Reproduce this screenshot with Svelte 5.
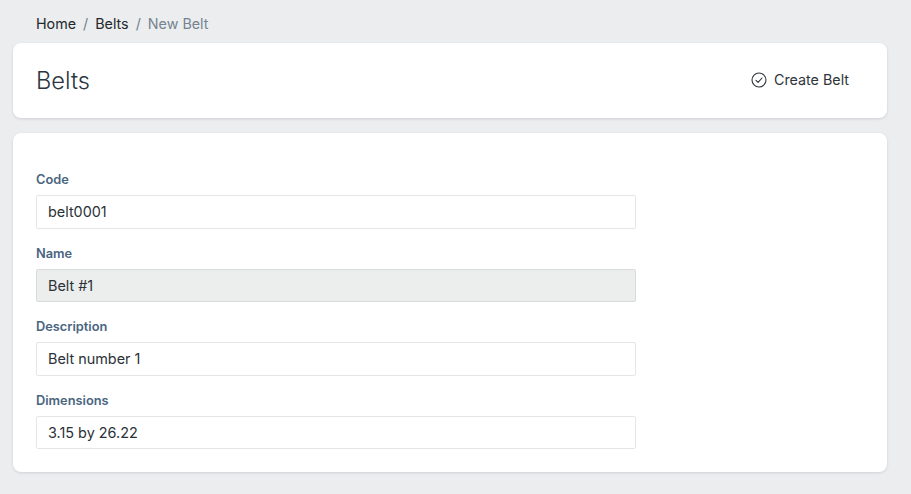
<script>
  const fields = [
    { id: 'code', label: 'Code', value: 'belt0001' },
    { id: 'name', label: 'Name', value: 'Belt #1', disabled: true },
    { id: 'description', label: 'Description', value: 'Belt number 1' },
    { id: 'dimensions', label: 'Dimensions', value: '3.15 by 26.22' }
  ];
</script>

<div class="page">
  <nav class="breadcrumb">
    <a href="#home">Home</a>
    <span class="sep">/</span>
    <a href="#belts">Belts</a>
    <span class="sep">/</span>
    <span class="current">New Belt</span>
  </nav>

  <header class="card head">
    <h1>Belts</h1>
    <button type="button" class="create">
      <svg width="16" height="16" viewBox="0 0 16 16" fill="none" stroke="currentColor" stroke-width="1.1" stroke-linecap="round" stroke-linejoin="round">
        <circle cx="8" cy="8" r="7" />
        <path d="M5 8.3l2.1 2.1L11 6" />
      </svg>
      Create Belt
    </button>
  </header>

  <form class="card body">
    {#each fields as f}
      <div class="field">
        <label for={f.id}>{f.label}</label>
        <input id={f.id} value={f.value} disabled={f.disabled} />
      </div>
    {/each}
  </form>
</div>

<style>
  :global(body) {
    background: #ebedef;
    font-family: Inter, "Liberation Sans", sans-serif;
  }

  .page {
    padding: 16px 24px 21px 13px;
    display: flex;
    flex-direction: column;
    gap: 15px;
  }

  .breadcrumb {
    display: flex;
    align-items: center;
    gap: 7px;
    padding-left: 23px;
    height: 15px;
    margin-bottom: -3px;
    font-size: 14.3px;
    line-height: 22px;
  }

  .breadcrumb a {
    color: #23282c;
    text-decoration: none;
  }

  .sep {
    color: #73818f;
  }

  .current {
    color: #768390;
  }

  .card {
    background: #fff;
    border-radius: 8px;
    box-shadow: 0 1px 3px rgba(0, 0, 21, 0.12);
  }

  .head {
    display: flex;
    align-items: center;
    justify-content: space-between;
    height: 75px;
    padding: 0 23px;
  }

  h1 {
    margin: 0;
    font-size: 23.6px;
    font-weight: 300;
    color: #2a3540;
  }

  .create {
    display: flex;
    align-items: center;
    gap: 7px;
    padding: 0 15px 2px 0;
    border: 0;
    background: none;
    font: inherit;
    font-size: 14.3px;
    color: #2f353a;
  }

  .body {
    padding: 39px 23px 23px;
    display: flex;
    flex-direction: column;
    gap: 17px;
  }

  .field {
    display: flex;
    flex-direction: column;
    gap: 8px;
  }

  label {
    font-size: 12.8px;
    line-height: 15px;
    font-weight: 600;
    color: #4a6580;
  }

  input {
    box-sizing: border-box;
    width: 600px;
    height: 33.5px;
    padding: 0 11px;
    border: 1px solid #e4e7ea;
    border-radius: 2px;
    background: #fff;
    font: inherit;
    font-size: 14.4px;
    color: #2a3138;
    outline: none;
  }

  input:disabled {
    background: #eceeed;
    border-color: #d8dbda;
    color: #2a3138;
    opacity: 1;
  }
</style>
